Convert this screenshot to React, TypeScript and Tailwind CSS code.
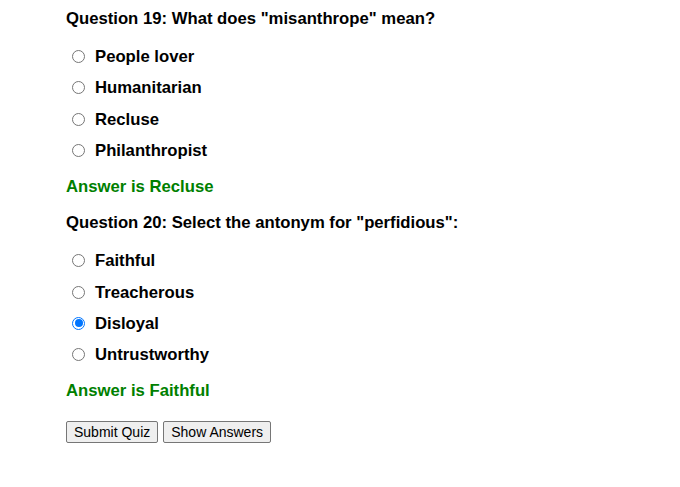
const QUESTIONS = [
  {
    title: 'Question 19: What does "misanthrope" mean?',
    options: ["People lover", "Humanitarian", "Recluse", "Philanthropist"],
    selected: -1,
    answer: "Recluse",
  },
  {
    title: 'Question 20: Select the antonym for "perfidious":',
    options: ["Faithful", "Treacherous", "Disloyal", "Untrustworthy"],
    selected: 2,
    answer: "Faithful",
  },
];

function Radio({ checked }: { checked: boolean }) {
  return checked ? (
    <span className="flex h-[13px] w-[13px] items-center justify-center rounded-full border border-[#0075ff] bg-white">
      <span className="block h-[8px] w-[8px] rounded-full bg-[#0075ff]" />
    </span>
  ) : (
    <span className="block h-[13px] w-[13px] rounded-full border border-[#767676] bg-white" />
  );
}

export default function App() {
  return (
    <div
      className="min-h-[487px] bg-white pl-[66px] pt-[10px] text-[16.7px] text-black"
      style={{ fontFamily: '"Liberation Sans", Arial, sans-serif' }}
    >
      {QUESTIONS.map((q) => (
        <div key={q.title} className="mb-[18px]">
          <h3 className="h-[18px] font-bold leading-[18px]">{q.title}</h3>
          <div className="mt-[13px]">
            {q.options.map((opt, i) => (
              <label
                key={opt}
                className="flex h-[31.3px] items-center font-bold"
              >
                <span className="ml-[6px] mr-[10px] block">
                  <Radio checked={i === q.selected} />
                </span>
                {opt}
              </label>
            ))}
          </div>
          <p className="mt-[12px] h-[18px] font-bold leading-[18px] text-[#008000]">
            Answer is {q.answer}
          </p>
        </div>
      ))}
      <div className="mt-[21px] flex gap-[5px] text-[14px]">
        <button className="h-[22px] rounded-[2px] border border-[#767676] bg-[#efefef] px-[7px] leading-[20px] text-black">
          Submit Quiz
        </button>
        <button className="h-[22px] rounded-[2px] border border-[#767676] bg-[#efefef] px-[7px] leading-[20px] text-black">
          Show Answers
        </button>
      </div>
    </div>
  );
}
